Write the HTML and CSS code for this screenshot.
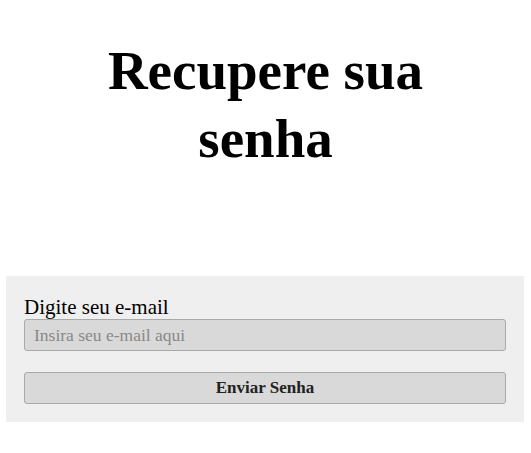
FILE: index.html
```html
<!DOCTYPE html>
<html lang="pt">
<head>
<meta charset="utf-8">
<title>Recupere sua senha</title>
<link rel="stylesheet" href="styles.css">
</head>
<body>
<main class="page">
  <header class="hero">
    <h1 class="title">Recupere sua senha</h1>
  </header>
  <form class="card">
    <label class="label" for="email">Digite seu e-mail</label>
    <input class="input" id="email" type="email" placeholder="Insira seu e-mail aqui">
    <button class="button" type="button">Enviar Senha</button>
  </form>
</main>
</body>
</html>
```
FILE: styles.css
```css
* { box-sizing: border-box; }
html, body { margin: 0; padding: 0; background: #fff; }
body { font-family: "Liberation Serif", "DejaVu Serif", serif; color: #000; }
.page { display: flex; flex-direction: column; }
.hero { display: flex; justify-content: center; padding: 37px 0 0; height: 276px; }
.title {
  margin: 0;
  width: 340px;
  text-align: center;
  font-size: 55px;
  line-height: 68px;
  font-weight: 700;
}
.card {
  margin: 0 7px 0 6px;
  background: #efefef;
  padding: 20px 18px 18px;
  display: flex;
  flex-direction: column;
}
.label { font-size: 21px; line-height: 23px; }
.input {
  height: 32px;
  margin: 0;
  padding: 0 9px;
  border: 1px solid #a9a9a9;
  border-radius: 3px;
  background: #d9d9d9;
  font-family: inherit;
  font-size: 17.5px;
  color: #000;
}
.input::placeholder { color: #888; }
.button {
  margin-top: 21px;
  height: 32px;
  border: 1px solid #a9a9a9;
  border-radius: 3px;
  background: #d9d9d9;
  font-family: inherit;
  font-size: 17px;
  font-weight: 700;
  color: #222;
}
```
